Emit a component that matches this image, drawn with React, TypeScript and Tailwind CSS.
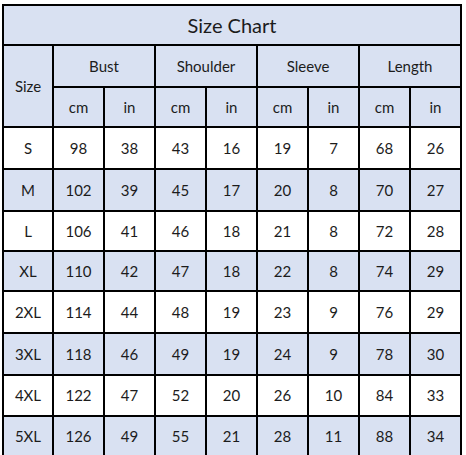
const rows: [string, number[]][] = [
  ['S', [98, 38, 43, 16, 19, 7, 68, 26]],
  ['M', [102, 39, 45, 17, 20, 8, 70, 27]],
  ['L', [106, 41, 46, 18, 21, 8, 72, 28]],
  ['XL', [110, 42, 47, 18, 22, 8, 74, 29]],
  ['2XL', [114, 44, 48, 19, 23, 9, 76, 29]],
  ['3XL', [118, 46, 49, 19, 24, 9, 78, 30]],
  ['4XL', [122, 47, 52, 20, 26, 10, 84, 33]],
  ['5XL', [126, 49, 55, 21, 28, 11, 88, 34]],
]

const groups = ['Bust', 'Shoulder', 'Sleeve', 'Length']

export default function App() {
  const cell = 'flex items-center justify-center'
  const head = `${cell} bg-[#d9e1f2]`

  return (
    <div className="min-h-screen bg-white pl-[2px] pt-[4px] text-[15px] text-[#1c1c1c]" style={{ fontFamily: 'Lato, "Noto Sans", sans-serif' }}>
      <div className="grid w-[460px] grid-cols-[48px_repeat(8,49px)] grid-rows-[38px_40px_38px_40px_40px_38px_38px_40px_40px_39px_39px] gap-[2px] bg-black p-[2px]">
        <div className={`${head} col-span-9 text-[20px]`}>Size Chart</div>

        <div className={`${head} row-span-2`}>Size</div>
        {groups.map((g) => (
          <div key={g} className={`${head} col-span-2`}>{g}</div>
        ))}
        {groups.map((g) => [
          <div key={g + 'cm'} className={head}>cm</div>,
          <div key={g + 'in'} className={head}>in</div>,
        ])}

        {rows.map(([size, vals], i) => {
          const bg = i % 2 === 1 ? 'bg-[#d9e1f2]' : 'bg-white'
          return [
            <div key={size} className={`${cell} ${bg}`}>{size}</div>,
            ...vals.map((v, j) => (
              <div key={size + j} className={`${cell} ${bg}`}>{v}</div>
            )),
          ]
        })}
      </div>
    </div>
  )
}
